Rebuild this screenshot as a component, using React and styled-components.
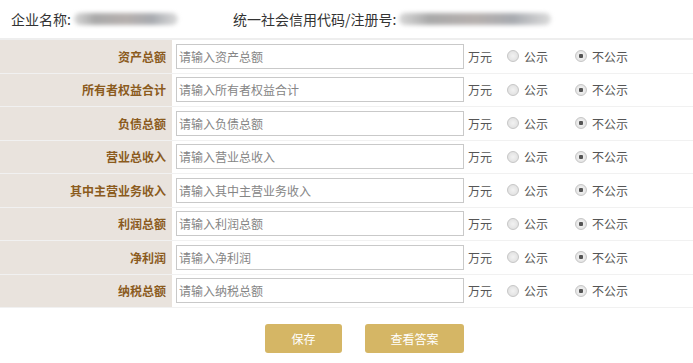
import React from "react";
import styled, { createGlobalStyle } from "styled-components";

const GlobalStyle = createGlobalStyle`
  body {
    margin: 0;
    background: #ffffff;
    font-family: "Microsoft YaHei", "Noto Sans CJK SC", "Liberation Sans", sans-serif;
  }
`;

const Page = styled.div`
  width: 693px;
  height: 363px;
  overflow: hidden;
`;

const Header = styled.div`
  display: flex;
  align-items: center;
  box-sizing: border-box;
  height: 40px;
  padding-left: 11px;
  padding-bottom: 1px;
  border-bottom: 2px solid #eeeeee;
  font-size: 14px;
  color: #333333;
`;

const HeaderItem = styled.div`
  display: flex;
  align-items: center;
  width: ${({ width }) => width}px;
`;

const Blur = styled.span`
  display: inline-block;
  width: ${({ width }) => width}px;
  height: 12px;
  margin-left: 3px;
  background: linear-gradient(90deg, #d8d8d8, #a9a9a9 20%, #b6b0ae 50%, #a8abb0 75%, #dcdcdc);
  filter: blur(2px);
  border-radius: 6px;
`;

const Table = styled.div`
  display: flex;
  flex-direction: column;
`;

const Row = styled.div`
  display: flex;
  align-items: center;
  height: 33.5px;
  box-sizing: border-box;
  border-bottom: 1px solid #f1f1f1;
`;

const Label = styled.div`
  width: 172px;
  height: 100%;
  box-sizing: border-box;
  padding-right: 6px;
  display: flex;
  align-items: center;
  justify-content: flex-end;
  background: #e9e3dd;
  font-size: 12px;
  font-weight: bold;
  color: #8b5b1d;
`;

const Input = styled.input`
  margin-left: 4px;
  width: 288px;
  height: 25px;
  box-sizing: border-box;
  border: 1px solid #c9c9c9;
  padding: 0 2px;
  font-family: inherit;
  font-size: 12px;
  outline: none;
  &::placeholder {
    color: #858585;
  }
`;

const Unit = styled.span`
  margin-left: 4px;
  font-size: 12px;
  color: #555555;
  width: 39px;
`;

const Option = styled.label`
  display: flex;
  align-items: center;
  gap: 5px;
  width: ${({ width }) => width}px;
  font-size: 12px;
  color: #555555;
`;

const Radio = styled.span`
  width: 10px;
  height: 10px;
  border-radius: 50%;
  border: 1px solid #c6c6c6;
  background: radial-gradient(circle, ${({ checked }) => (checked ? "#555 0, #555 2px, #eee 2.5px" : "#f2f2f2 0")}, #dcdcdc 100%);
`;

const Actions = styled.div`
  display: flex;
  justify-content: center;
  gap: 23px;
  padding-top: 16px;
  padding-left: 36px;
`;

const Button = styled.button`
  width: ${({ width }) => width}px;
  height: 29px;
  border: none;
  border-radius: 3px;
  background: #d5b665;
  color: #ffffff;
  font-family: inherit;
  font-size: 12px;
`;

const rows = [
  ["资产总额", "请输入资产总额"],
  ["所有者权益合计", "请输入所有者权益合计"],
  ["负债总额", "请输入负债总额"],
  ["营业总收入", "请输入营业总收入"],
  ["其中主营业务收入", "请输入其中主营业务收入"],
  ["利润总额", "请输入利润总额"],
  ["净利润", "请输入净利润"],
  ["纳税总额", "请输入纳税总额"],
];

const App = () => {
  return (
    <Page>
      <GlobalStyle />
      <Header>
        <HeaderItem width={222}>
          企业名称:<Blur width={104} />
        </HeaderItem>
        <HeaderItem>
          统一社会信用代码/注册号:<Blur width={152} />
        </HeaderItem>
      </Header>
      <Table>
        {rows.map(([label, placeholder]) => (
          <Row key={label}>
            <Label>{label}</Label>
            <Input placeholder={placeholder} />
            <Unit>万元</Unit>
            <Option width={68}>
              <Radio />
              公示
            </Option>
            <Option>
              <Radio checked />
              不公示
            </Option>
          </Row>
        ))}
      </Table>
      <Actions>
        <Button width={77}>保存</Button>
        <Button width={99}>查看答案</Button>
      </Actions>
    </Page>
  );
};

export default App;
